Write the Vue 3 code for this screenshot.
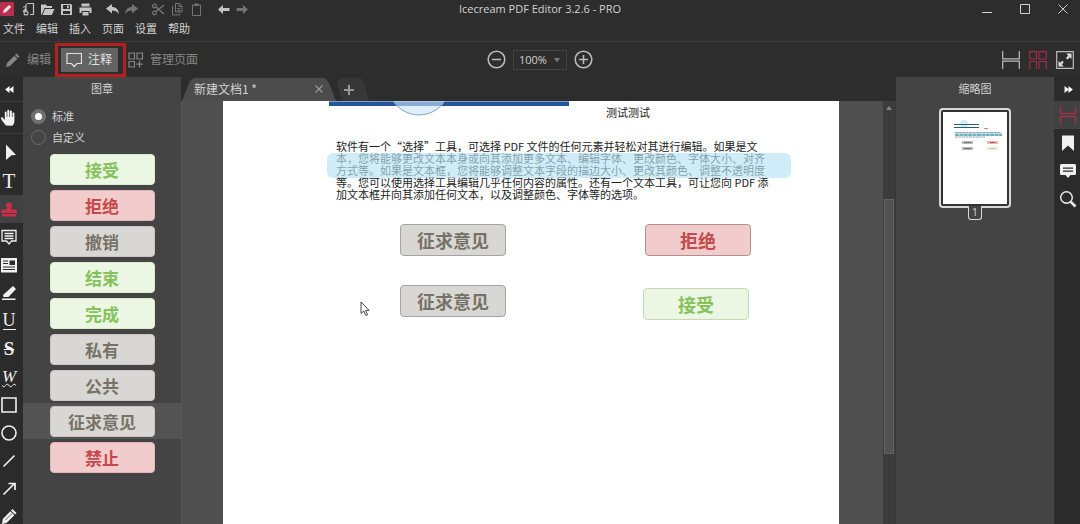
<script setup>
import { ref } from 'vue'

const menus = ['文件', '编辑', '插入', '页面', '设置', '帮助']

const quickGroups = [
  [
    { name: '新建', svg: '<path d="M6 1.500h6.500v11H9M2 9.500l3-3v4M5 2v3H2" fill="none" stroke="currentColor" stroke-width="1.200"/><circle cx="5" cy="11" r="2" fill="none" stroke="currentColor" stroke-width="1.100"/>' },
    { name: '打开', svg: '<path d="M1 12.500V2.500h5l1 1.500h5v2H4.500L1.800 12.500zM5 7h9.500l-2.700 6H2.500z" fill="currentColor"/>' },
    { name: '保存', svg: '<path fill-rule="evenodd" d="M2 2h10l1 1v10H2zM4 3v4h7V3zM4 9v3h7V9zM8 3.500h1.800v2.700H8z" fill="currentColor"/>' },
    { name: '打印', svg: '<path fill-rule="evenodd" d="M3.500 1.500h8v3h-8zM1.500 5.500h12v5.500h-2V9h-8v2h-2zM4.500 10h6v3.500h-6z" fill="currentColor"/>' }
  ],
  [
    { name: '撤消', svg: '<path d="M1 6.500L7 2v3c4 0 6.500 2.500 7 7-2-2.700-4-3.500-7-3.500V11.500z" fill="currentColor"/>' },
    { name: '重做', dim: true, svg: '<path d="M14 6.500L8 2v3c-4 0-6.500 2.500-7 7 2-2.700 4-3.500 7-3.500V11.500z" fill="currentColor"/>' }
  ],
  [
    { name: '剪切', dim: true, svg: '<path d="M5 9.500L13 3M5 5l8 7" fill="none" stroke="currentColor" stroke-width="1.600"/><circle cx="3.500" cy="4" r="1.800" fill="none" stroke="currentColor" stroke-width="1.300"/><circle cx="3.500" cy="11" r="1.800" fill="none" stroke="currentColor" stroke-width="1.300"/>' },
    { name: '复制', dim: true, svg: '<path d="M5.500 1.500h4l2.500 2.500v6h-6.500zM3.500 4.500H2.500v8.500h7v-1.500M9 2v2.500h3M7 6.500h3.500M7 8.500h3.500" fill="none" stroke="currentColor"/>' },
    { name: '粘贴', dim: true, svg: '<path d="M3.500 3h8v10.500h-8z" fill="none" stroke="currentColor"/><path d="M5.500 1.500h4V4h-4z" fill="currentColor"/>' }
  ],
  [
    { name: '后退', svg: '<path d="M2 7.500L7 3v3h6.500v3H7v3z" fill="currentColor"/>' },
    { name: '前进', dim: true, svg: '<path d="M13 7.500L8 3v3H1.500v3H8v3z" fill="currentColor"/>' }
  ]
]

const tools = [
  { name: '选择', svg: '<path d="M6 .5l10 10.500-4.500.3L6 16z" fill="currentColor"/>' },
  { name: '文本', letter: 'T', cls: 'l-t' },
  { name: '图章', active: true, svg: '<path d="M9 2.500a3 3 0 0 1 3 3c0 1.500-1 2-1 4h4.500c1 0 1.500.8 1.500 1.800v1.700H1v-1.700c0-1 .5-1.800 1.500-1.800H7c0-2-1-2.500-1-4a3 3 0 0 1 3-3zM2 14h14v2.500H2z" fill="currentColor"/>' },
  { name: '注释', svg: '<path d="M2 2.500h14v10.500h-4.500L9 16l-2.500-3H2zM4.500 5.500h9M4.500 8h9M4.500 10.500h9" fill="none" stroke="currentColor" stroke-width="1.300"/>' },
  { name: '文本框', svg: '<path fill-rule="evenodd" d="M1 2h16v14.500H1zM3 4.500v1h5v-1zM3 7v1h5V7zM9.500 4.500V9H15V4.500zM3 10.500v1h12v-1zM3 13v1h12v-1z" fill="currentColor"/>' },
  { name: '高亮', svg: '<path d="M13 2l3 3-7.500 8H3.500L3 11zM2 14.500h13.500v1.500H2z" fill="currentColor"/>' },
  { name: '下划线', letter: 'U', cls: 'l-u' },
  { name: '删除线', letter: 'S', cls: 'l-s' },
  { name: '波浪线', letter: 'W', cls: 'l-w' },
  { name: '矩形', svg: '<path d="M2 2h14v14H2z" fill="none" stroke="currentColor" stroke-width="1.600"/>' },
  { name: '椭圆', svg: '<circle cx="9" cy="9" r="7" fill="none" stroke="currentColor" stroke-width="1.600"/>' },
  { name: '直线', svg: '<path d="M3.500 14.500l11-11" fill="none" stroke="currentColor" stroke-width="1.600"/>' },
  { name: '箭头', svg: '<path d="M3.500 14.500l11-11M8.500 3.500h6.500V10" fill="none" stroke="currentColor" stroke-width="1.700"/>' },
  { name: '铅笔', svg: '<path d="M12.500 1l4 4-1.500 1.500-4-4zM10.300 3.300l4 4-7.800 7.800-4.500 1 .8-5z" fill="currentColor"/><path d="M12 5.500l-6.500 6.500" stroke="#2b2b2b" stroke-width=".7"/>' }
]

const sideTabs = [
  { name: '缩略图', active: true, svg: '<path d="M1.500 0v7.500h15V0M1.500 18v-7.500h15V18" fill="none" stroke="currentColor" stroke-width="1.300"/>' },
  { name: '书签', svg: '<path d="M3 1.500h12v15.500L9 11.500l-6 5.500z" fill="currentColor"/>' },
  { name: '批注', svg: '<path fill-rule="evenodd" d="M2.500 2h13q1.500 0 1.500 1.500v8q0 1.500-1.500 1.500h-4L9 16 6.500 13h-4Q1 13 1 11.500v-8Q1 2 2.500 2zM4 5.500v1.200h10V5.500zM4 8.500v1.200h10V8.500z" fill="currentColor"/>' },
  { name: '搜索', svg: '<circle cx="7.500" cy="7.500" r="5.800" fill="none" stroke="currentColor" stroke-width="1.400"/><path d="M11.800 11.800l4.700 4.700" stroke="currentColor" stroke-width="2.600"/>' }
]

const stamps = [
  { text: '接受', tone: 'green' },
  { text: '拒绝', tone: 'red' },
  { text: '撤销', tone: 'gray' },
  { text: '结束', tone: 'green' },
  { text: '完成', tone: 'green' },
  { text: '私有', tone: 'gray' },
  { text: '公共', tone: 'gray' },
  { text: '征求意见', tone: 'gray' },
  { text: '禁止', tone: 'red' }
]
const selected = ref(7)
const kind = ref('standard')
const zoom = ref('100%')

const placed = [
  { text: '征求意见', tone: 'gray', x: 177, y: 123 },
  { text: '拒绝', tone: 'red', x: 422, y: 123 },
  { text: '征求意见', tone: 'gray', x: 177, y: 184 },
  { text: '接受', tone: 'green', x: 420, y: 187 }
]
</script>

<template>
  <div class="app">
    <header class="titlebar">
      <div class="quick">
        <svg class="logo" viewBox="0 0 14 14"><rect width="14" height="14" rx="1" fill="#b92d4d" /><path d="M3 11l.7-3L9 3l2.200 2L6 10.300z" fill="#f5dfe3" /></svg>
        <div v-for="(group, g) in quickGroups" :key="g" class="quick-group">
          <button v-for="b in group" :key="b.name" :class="{ dim: b.dim }" :aria-label="b.name">
            <svg viewBox="0 0 15 15" v-html="b.svg"></svg>
          </button>
        </div>
      </div>
      <h1>Icecream PDF Editor 3.2.6 - PRO</h1>
      <div class="window-buttons">
        <button aria-label="最小化"><svg viewBox="0 0 12 12"><path d="M1 9.500h10" /></svg></button>
        <button aria-label="最大化"><svg viewBox="0 0 12 12"><path d="M1.500 1.500h9v9h-9z" /></svg></button>
        <button aria-label="关闭"><svg viewBox="0 0 12 12"><path d="M1.500 1.500l9 9M10.500 1.500l-9 9" /></svg></button>
      </div>
    </header>

    <nav class="menubar">
      <button v-for="m in menus" :key="m">{{ m }}</button>
    </nav>

    <div class="toolbar">
      <div class="modes">
        <button class="mode edit">
          <svg viewBox="0 0 16 16"><path d="M11.500 1.500l3 3-1.500 1.500-3-3zM9.300 3.700l3 3L5 14l-4 1 1-4z" fill="currentColor" /></svg>
          编辑
        </button>
        <button class="mode current">
          <svg viewBox="0 0 16 16"><path d="M1 1.500h14.500v10H11L8.200 14.500 5.500 11.500H1z" fill="none" stroke="currentColor" stroke-width="1.200" /></svg>
          注释
        </button>
        <button class="mode manage">
          <svg viewBox="0 0 16 16"><path d="M1 1h5.500v6H1zM9 1h5.500v6H9zM1 9.500h5.500v5.500H1zM11.500 9v6.500M8.300 12.200h6.500" fill="none" stroke="currentColor" stroke-width="1.200" /></svg>
          管理页面
        </button>
      </div>
      <div class="zoom">
        <button aria-label="缩小"><svg viewBox="0 0 19 19"><circle cx="9.500" cy="9.500" r="8.300" /><path d="M5 9.500h9" /></svg></button>
        <div class="zoom-field">
          <select v-model="zoom" aria-label="缩放比例">
            <option>50%</option>
            <option>100%</option>
            <option>200%</option>
          </select>
          <svg viewBox="0 0 8 5"><path d="M1 0h6L4 4.500z" fill="#777" /></svg>
        </div>
        <button aria-label="放大"><svg viewBox="0 0 19 19"><circle cx="9.500" cy="9.500" r="8.300" /><path d="M5 9.500h9M9.500 5v9" /></svg></button>
      </div>
      <div class="views">
        <button aria-label="连续视图"><svg viewBox="0 0 18 18"><path d="M.7 0v7.800h16.600V0M.7 18v-7.800h16.600V18" /></svg></button>
        <button class="on" aria-label="网格视图"><svg viewBox="0 0 18 18"><path d="M.7 8V.7h6.800v7.300zM10 8V.7h7.300v7.300zM.7 18v-7.500h6.800V18M10 18v-7.500h7.300V18" /></svg></button>
        <button aria-label="全屏"><svg viewBox="0 0 18 18"><path d="M.7.7h16.600v16.600H.7z" /><path class="solid" d="M15.500 2.500v5.500l-1.700-1.700-2.300 2.300-1.600-1.600 2.300-2.300-1.900-2.200zM2.500 15.500v-5.500l1.700 1.700 2-2 1.600 1.600-2 2 1.900 2.200z" /></svg></button>
      </div>
    </div>

    <div class="body">
      <div class="rail">
        <button class="collapse" aria-label="收起左侧栏"><svg viewBox="0 0 10 8"><path d="M5 0v8L0 4zM9.500 0v8l-5-4z" fill="currentColor" /></svg></button>
        <button class="hand" aria-label="手形工具">
          <svg viewBox="0 0 18 18"><path d="M6 16.500C4 14.500 2 11.500 1 9.500c-.4-1.200 1-1.700 1.800-.8L4.800 11V3.500c0-1.300 1.900-1.300 1.900 0V8h.6V1.800c0-1.300 2-1.300 2 0V8h.6V2.500c0-1.300 2-1.300 2 0V8h.6V4.500c0-1.300 1.900-1.300 1.900 0V12c0 2-1 3.500-1.900 4.700z" fill="currentColor" /></svg>
        </button>
        <button v-for="t in tools" :key="t.name" class="tool" :class="{ active: t.active }" :aria-label="t.name">
          <span v-if="t.letter" :class="t.cls">{{ t.letter }}</span>
          <svg v-else viewBox="0 0 18 18" v-html="t.svg"></svg>
        </button>
      </div>

      <aside class="panel">
        <h2>图章</h2>
        <div class="kinds">
          <label><input v-model="kind" type="radio" name="kind" value="standard" />标准</label>
          <label><input v-model="kind" type="radio" name="kind" value="custom" />自定义</label>
        </div>
        <div class="stamp-list">
          <button v-for="(s, i) in stamps" :key="s.text" class="stamp-row" :class="{ selected: i === selected }" @click="selected = i">
            <span class="stamp" :class="s.tone">{{ s.text }}</span>
          </button>
        </div>
      </aside>

      <main class="workspace">
        <div class="tabs">
          <div class="tab">
            <span>新建文档1 *</span>
            <button aria-label="关闭标签"><svg viewBox="0 0 8 8"><path d="M.5.5l7 7M7.500.5l-7 7" stroke="#999" stroke-width="1.200" /></svg></button>
          </div>
          <button class="add" aria-label="新建标签"><svg viewBox="0 0 10 10"><path d="M5 0v10M0 5h10" stroke="#999" stroke-width="2" /></svg></button>
        </div>
        <div class="viewport">
          <article class="page">
            <div class="page-top">
              <svg class="banner" viewBox="0 0 240 16">
                <rect width="240" height="5" fill="#24549c" />
                <rect width="240" height="1" fill="#7f9fcb" />
                <circle cx="90" cy="-17" r="31" fill="#c9e3f8" fill-opacity=".62" stroke="#8aa4b8" />
              </svg>
              <p>测试测试</p>
            </div>
            <p class="para">
              <span>软件有一个“选择”工具，可选择 PDF 文件的任何元素并轻松对其进行编辑。如果是文</span>
              <span>本，您将能够更改文本本身或向其添加更多文本、编辑字体、更改颜色、字体大小、对齐</span>
              <span>方式等。如果是文本框，您将能够调整文本字段的描边大小、更改其颜色、调整不透明度</span>
              <span>等。您可以使用选择工具编辑几乎任何内容的属性。还有一个文本工具，可让您向 PDF 添</span>
              <span>加文本框并向其添加任何文本，以及调整颜色、字体等的选项。</span>
              <i class="marker"></i>
            </p>
            <span v-for="(s, i) in placed" :key="i" class="stamp placed" :class="s.tone" :style="{ left: s.x + 'px', top: s.y + 'px' }">{{ s.text }}</span>
            <svg class="cursor" viewBox="0 0 10 16"><path d="M1 1v11.500l2.800-2.500 2 4.500 1.800-.8-2-4.300h3.500z" fill="#fff" stroke="#333" stroke-width=".9" /></svg>
          </article>
          <div class="scrollbar">
            <svg viewBox="0 0 8 6"><path d="M1 5l3-4 3 4z" fill="#858585" /></svg>
            <div class="thumb"></div>
          </div>
        </div>
      </main>

      <aside class="panel">
        <h2>缩略图</h2>
        <button class="thumbnail" aria-label="第 1 页">
          <svg viewBox="0 0 64 92">
            <rect width="64" height="92" fill="#fff" />
            <circle cx="21" cy="12" r="4" fill="#d3ecf4" />
            <path d="M11 12.500h25M11 15.500h25" stroke="#25606f" stroke-width="1.200" />
            <path d="M41 16.500h4" stroke="#999" />
            <path d="M12 20.500h46M12 25h30" stroke="#8caab5" stroke-width="1" stroke-dasharray="3 .5" />
            <path d="M12 22.700h47" stroke="#75b1c3" stroke-width="2.500" stroke-dasharray="4 .4" />
            <path d="M19 30.500h11M19 36.500h11" stroke="#b9b9b9" stroke-width="3" />
            <path d="M21 30.500h7M21 36.500h7" stroke="#777" />
            <path d="M44 30.500h11" stroke="#eab9b5" stroke-width="3" />
            <path d="M47 30.500h5" stroke="#b94e48" />
            <path d="M44 36.500h11" stroke="#eeefd2" stroke-width="3" />
            <path d="M47 36.500h5" stroke="#c2c996" />
          </svg>
          <span>1</span>
        </button>
      </aside>

      <div class="rail right">
        <button class="collapse" aria-label="收起右侧栏"><svg viewBox="0 0 10 8"><path d="M.5 0v8l5-4zM5 0v8l5-4z" fill="currentColor" /></svg></button>
        <button v-for="t in sideTabs" :key="t.name" class="tool" :class="{ active: t.active }" :aria-label="t.name">
          <svg viewBox="0 0 18 18" v-html="t.svg"></svg>
        </button>
      </div>
    </div>
  </div>
</template>

<style>
body {
  background: #2d2d2d;
}
</style>

<style scoped>
.app {
  height: 100vh;
  display: flex;
  flex-direction: column;
  overflow: hidden;
  background: #2d2d2d;
  color: #d2d2d2;
  font: 11px/16px "Open Sans", "Noto Sans CJK SC", sans-serif;
}
* {
  box-sizing: border-box;
}
button {
  display: flex;
  align-items: center;
  justify-content: center;
  padding: 0;
  border: 0;
  background: none;
  color: inherit;
  font: inherit;
}
svg {
  display: block;
  flex: none;
}
h1,
h2,
p {
  margin: 0;
  font-size: inherit;
  font-weight: normal;
}

.titlebar {
  flex: none;
  height: 18px;
  display: grid;
  grid-template-columns: 1fr auto 1fr;
  align-items: center;
}
.titlebar h1 {
  font-size: 11px;
}
.quick {
  display: flex;
  align-items: center;
  gap: 12px;
  color: #c4c4c4;
}
.logo {
  width: 14px;
  height: 14px;
  margin-right: -5px;
}
.quick-group {
  display: flex;
  gap: 4px;
}
.quick-group svg {
  width: 15px;
  height: 15px;
}
.dim {
  color: #747474;
}
.window-buttons {
  display: flex;
  justify-content: flex-end;
  gap: 8px;
  padding-right: 2px;
}
.window-buttons button {
  width: 30px;
  height: 16px;
}
.window-buttons svg {
  width: 12px;
  height: 12px;
  fill: none;
  stroke: #d0d0d0;
}

.menubar {
  flex: none;
  height: 24px;
  display: flex;
  align-items: center;
  gap: 11px;
  padding: 0 3px 2px;
  border-bottom: 1px solid #3d3d3d;
}

.toolbar {
  flex: none;
  height: 35px;
  display: grid;
  grid-template-columns: 1fr auto 1fr;
  align-items: center;
  font-size: 12px;
}
.modes {
  display: flex;
  align-items: center;
}
.mode {
  height: 24px;
  gap: 6px;
  color: #858585;
}
.mode svg {
  width: 16px;
  height: 16px;
}
.edit {
  padding: 0 10px 0 5px;
}
.current {
  position: relative;
  padding: 0 6px 0 5px;
  background: #636363;
  color: #e2e2e2;
}
.current::after {
  content: "";
  position: absolute;
  inset: -5px -8px -5px -6px;
  border: 3px solid #b5201f;
}
.manage {
  padding-left: 10px;
}
.zoom {
  display: flex;
  align-items: center;
  gap: 7px;
}
.zoom button svg {
  width: 19px;
  height: 19px;
  fill: none;
  stroke: #b9b9b9;
  stroke-width: 1.6;
}
.zoom-field {
  position: relative;
}
.zoom-field select {
  appearance: none;
  display: block;
  width: 54px;
  height: 20px;
  padding: 0 0 0 5px;
  border: 1px solid #434343;
  border-radius: 0;
  background: transparent;
  color: #cfcfcf;
  font: 11px/16px "Open Sans", sans-serif;
}
.zoom-field svg {
  position: absolute;
  right: 6px;
  top: 8px;
  width: 8px;
  height: 5px;
}
.views {
  display: flex;
  justify-content: flex-end;
  gap: 9px;
  padding-right: 6px;
}
.views svg {
  width: 18px;
  height: 18px;
  fill: none;
  stroke: #bcbcbc;
  stroke-width: 1.2;
}
.views .on svg {
  stroke: #a52c48;
}
.views .solid {
  fill: #dedede;
  stroke: none;
}

.body {
  flex: 1;
  min-height: 0;
  display: flex;
}
.rail {
  flex: none;
  width: 23px;
  overflow: hidden;
  background: #2b2b2b;
  color: #f0f0f0;
}
.rail button {
  width: 100%;
  padding-right: 5px;
}
.rail.right {
  width: 26px;
}
.rail.right button {
  padding-right: 0;
  padding-left: 2px;
}
.rail svg {
  width: 18px;
  height: 18px;
}
.rail .collapse {
  height: 24px;
  color: #fff;
}
.rail .collapse svg {
  width: 9px;
  height: 7px;
}
.rail .hand {
  height: 33px;
  margin-bottom: 5px;
  border-top: 1px solid #3b3b3b;
  border-bottom: 1px solid #3b3b3b;
}
.tool {
  height: 28px;
}
.tool.active {
  background: #414141;
  color: #cf2c4c;
}
.right .tool.active {
  color: #9c3148;
}
.tool span {
  font: 19px/20px "Liberation Serif", serif;
}
.tool .l-t {
  font-size: 21px;
}
.tool .l-u {
  font-size: 18px;
  line-height: 17px;
  border-bottom: 1px solid;
}
.tool .l-s {
  font-weight: bold;
  text-decoration: line-through 1px;
}
.tool .l-w {
  font-size: 17px;
  font-style: italic;
  text-decoration: underline wavy 1px;
}

.panel {
  flex: none;
  width: 158px;
  background: #444;
}
.panel h2 {
  height: 24px;
  line-height: 24px;
  text-align: center;
}
.kinds {
  padding: 5px 8px 0;
}
.kinds label {
  height: 21px;
  display: flex;
  align-items: center;
  gap: 6px;
}
.kinds input {
  appearance: none;
  width: 15px;
  height: 15px;
  margin: 0;
  border: 1px solid #6b6b6b;
  border-radius: 50%;
}
.kinds input:checked {
  border: 4px solid #707070;
  background: #fff;
}
.stamp-list {
  padding-top: 3px;
}
.stamp-row {
  width: 100%;
  height: 36px;
}
.stamp-row.selected {
  background: #535353;
}
.stamp {
  width: 105px;
  height: 31px;
  display: flex;
  align-items: center;
  justify-content: center;
  border: 1px solid;
  border-radius: 4px;
  font: bold 17px/29px "Noto Sans CJK SC", sans-serif;
}
.green {
  background: #ebf7e3;
  border-color: #d9edcc;
  color: #85c25b;
}
.red {
  background: #f2cccd;
  border-color: #e4b3b5;
  color: #c24a4b;
}
.gray {
  background: #d9d7d4;
  border-color: #c8c6c2;
  color: #777267;
}

.workspace {
  flex: 1;
  min-width: 0;
  display: flex;
  flex-direction: column;
}
.tabs {
  flex: none;
  height: 24px;
  display: flex;
  align-items: flex-end;
  gap: 1px;
  padding-left: 1px;
}
.tab {
  width: 154px;
  height: 23px;
  display: flex;
  align-items: center;
  justify-content: space-between;
  padding: 0 13px 2px 12px;
  background: #4c4c4c;
  clip-path: polygon(0 100%, 7px 5px, 10px 1px, 13px 0, calc(100% - 13px) 0, calc(100% - 10px) 1px, calc(100% - 7px) 5px, 100% 100%);
  font: 12px/16px "Noto Sans CJK SC", sans-serif;
}
.tab svg {
  width: 8px;
  height: 8px;
}
.add {
  width: 32px;
  height: 23px;
  padding-right: 8px;
  background: #373737;
  clip-path: polygon(0 5px, 3px 0, 24px 0, 27px 4px, 100% 100%, 5px 100%);
}
.add svg {
  width: 10px;
  height: 10px;
}
.viewport {
  flex: 1;
  min-height: 0;
  display: flex;
  padding-left: 41px;
  border-left: 1px solid #585858;
  background: #4f4f4f;
}
.page {
  position: relative;
  flex: 1;
  padding: 0 42px 0 106px;
  background: #fff;
  color: #1c1c1c;
  font: 11px/12px "Noto Sans CJK SC", sans-serif;
}
.page-top {
  display: flex;
  gap: 37px;
}
.page-top p {
  padding-top: 5px;
}
.banner {
  width: 240px;
  height: 16px;
}
.para {
  position: relative;
  margin: 22px 0 0 7px;
  white-space: nowrap;
}
.para span {
  display: block;
}
.marker {
  position: absolute;
  left: -9px;
  right: 6px;
  top: 13px;
  height: 25px;
  border-radius: 6px;
  background: #b5e4f4;
  opacity: 0.65;
}
.placed {
  position: absolute;
  width: 106px;
  height: 32px;
  font-size: 18px;
}
.placed.gray {
  border-color: #a5a4a2;
}
.placed.red {
  border-color: #b98e90;
}
.placed.green {
  border-color: #c8d8b4;
}
.cursor {
  position: absolute;
  left: 137px;
  top: 200px;
  width: 10px;
  height: 16px;
}
.scrollbar {
  flex: none;
  width: 13px;
  margin-left: 44px;
  padding: 4px 1px 0;
  background: #3c3c3c;
  border-right: 1px solid #383838;
}
.scrollbar svg {
  width: 8px;
  height: 6px;
  margin: 0 auto;
}
.thumb {
  height: 255px;
  margin-top: 88px;
  border: 1px solid #636363;
  background: #525252;
}

.thumbnail {
  flex-direction: column;
  margin: 7px auto 0;
}
.thumbnail svg {
  width: 72px;
  height: 100px;
  padding: 2px;
  border: 2px solid #d8d8d8;
  border-radius: 4px;
  background: #333;
}
.thumbnail span {
  width: 14px;
  height: 14px;
  margin-top: -2px;
  border: 1px solid #d8d8d8;
  border-top: 0;
  border-radius: 0 0 3px 3px;
  background: #444;
  line-height: 12px;
}
</style>
